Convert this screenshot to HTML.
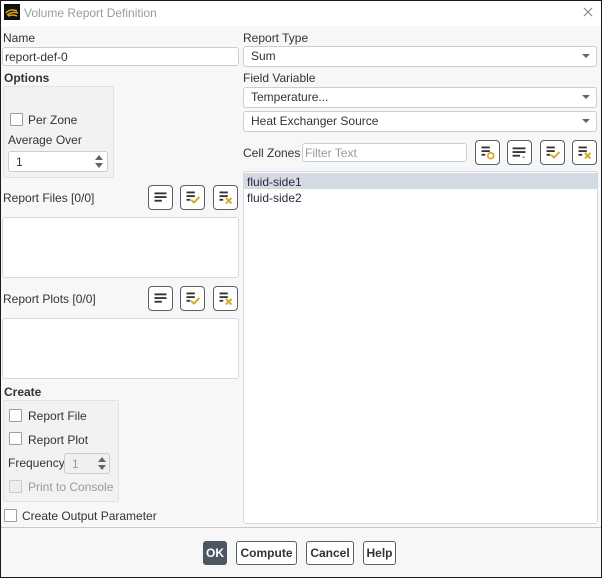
<!DOCTYPE html>
<html><head><meta charset="utf-8"><style>
*{box-sizing:border-box;margin:0;padding:0}
body{width:602px;height:578px;overflow:hidden;font-family:"Liberation Sans",sans-serif;font-size:12px;color:#333;background:#f7f7f7}
.win{position:absolute;left:0;top:0;width:602px;height:578px;background:#f7f7f7}
.a{position:absolute}
.t{position:absolute;line-height:14px;white-space:nowrap}
.b{font-weight:bold}
.in{position:absolute;background:#fff;border:1px solid #c9ced4;border-radius:3px}
.dd{position:absolute;background:#fff;border:1px solid #c9ced4;border-radius:3px;padding-left:7px;line-height:18px}
.dd:after{content:"";position:absolute;right:6px;top:7px;border-left:4px solid transparent;border-right:4px solid transparent;border-top:4px solid #666}
.grp{position:absolute;border:1px solid #e2e2e2;background:#f2f2f2;border-radius:2px}
.cb{position:absolute;width:13px;height:13px;border:1px solid #9aa0a6;background:#fff;border-radius:1px}
.ib{position:absolute;width:25px;height:25px;border:1px solid #5a6068;border-radius:4px;background:#fff}
.btn{position:absolute;height:24px;border:1px solid #5a6068;border-radius:3px;background:#fff;font-weight:bold;line-height:22px;text-align:center;font-size:12px;color:#333}
.list{position:absolute;background:#fff;border:1px solid #d4d8dc;border-radius:3px}
</style></head><body><div class="win">
<div class="a" style="left:0;top:0;width:602px;height:26px;background:#fff"></div>
<svg class="a" style="left:4px;top:4px" width="16" height="16" viewBox="0 0 16 16"><rect width="16" height="16" fill="#111"/><path d="M2 9 Q6 4 13 7 M3 11 Q8 7 14 9 M4 12 Q9 10 13 12" stroke="#d9a31c" stroke-width="1.5" fill="none"/></svg>
<div class="t" style="left:24px;top:6px;color:#9a9a9a;font-size:12px">Volume Report Definition</div>
<svg class="a" style="left:583px;top:7px" width="10" height="10"><path d="M1 1L9 9M9 1L1 9" stroke="#888" stroke-width="1.2"/></svg>

<div class="t" style="left:3px;top:31px">Name</div>
<div class="in" style="left:2px;top:47px;width:237px;height:19px"><span class="t" style="left:2px;top:2px">report-def-0</span></div>
<div class="t b" style="left:4px;top:71px">Options</div>
<div class="grp" style="left:3px;top:86px;width:111px;height:92px"></div>
<div class="cb" style="left:10px;top:113px"></div>
<div class="t" style="left:28px;top:113px">Per Zone</div>
<div class="t" style="left:8px;top:133px">Average Over</div>
<div class="in" style="left:8px;top:151px;width:100px;height:21px"><span class="t" style="left:7px;top:3px">1</span>
<div class="a" style="right:4px;top:3px;border-left:4px solid transparent;border-right:4px solid transparent;border-bottom:5px solid #666"></div>
<div class="a" style="right:4px;top:11px;border-left:4px solid transparent;border-right:4px solid transparent;border-top:5px solid #666"></div></div>

<div class="t" style="left:3px;top:191px">Report Files [0/0]</div>
<div class="list" style="left:2px;top:217px;width:237px;height:61px"></div>
<div class="t" style="left:3px;top:292px">Report Plots [0/0]</div>
<div class="list" style="left:2px;top:318px;width:237px;height:61px"></div>

<div class="t b" style="left:4px;top:385px">Create</div>
<div class="grp" style="left:3px;top:400px;width:116px;height:102px"></div>
<div class="cb" style="left:9px;top:409px"></div><div class="t" style="left:28px;top:409px">Report File</div>
<div class="cb" style="left:9px;top:432px"></div><div class="t" style="left:28px;top:433px">Report Plot</div>
<div class="t" style="left:8px;top:456px">Frequency</div>
<div class="in" style="left:64px;top:453px;width:46px;height:21px;background:#f0f0f0"><span class="t" style="left:7px;top:3px;color:#999">1</span>
<div class="a" style="right:3px;top:3px;border-left:4px solid transparent;border-right:4px solid transparent;border-bottom:5px solid #666"></div>
<div class="a" style="right:3px;top:11px;border-left:4px solid transparent;border-right:4px solid transparent;border-top:5px solid #666"></div></div>
<div class="cb" style="left:9px;top:480px;background:#eee;border-color:#ccc"></div><div class="t" style="left:28px;top:480px;color:#999">Print to Console</div>
<div class="cb" style="left:4px;top:509px"></div><div class="t" style="left:22px;top:509px">Create Output Parameter</div>

<div class="t" style="left:243px;top:31px">Report Type</div>
<div class="dd" style="left:243px;top:46px;width:354px;height:21px">Sum</div>
<div class="t" style="left:243px;top:71px">Field Variable</div>
<div class="dd" style="left:243px;top:87px;width:354px;height:21px">Temperature...</div>
<div class="dd" style="left:243px;top:111px;width:354px;height:21px">Heat Exchanger Source</div>
<div class="t" style="left:243px;top:146px">Cell Zones</div>
<div class="in" style="left:302px;top:143px;width:165px;height:19px"><span class="t" style="left:2px;top:2px;color:#999">Filter Text</span></div>
<div class="list" style="left:243px;top:171px;width:355px;height:353px">
<div class="a" style="left:0;top:1px;width:353px;height:16px;background:#d4dae2"></div>
<div class="t" style="left:3px;top:3px;color:#2a2a40">fluid-side1</div>
<div class="t" style="left:3px;top:19px;color:#2a2a40">fluid-side2</div></div>

<div class="a" style="left:1px;top:527px;width:600px;height:1px;background:#c8c8c8"></div>
<div class="btn" style="left:203px;top:541px;width:24px;background:#4c5560;color:#fff;border-color:#4c5560">OK</div>
<div class="btn" style="left:236px;top:541px;width:61px">Compute</div>
<div class="btn" style="left:306px;top:541px;width:48px">Cancel</div>
<div class="btn" style="left:363px;top:541px;width:33px">Help</div>

<svg width="0" height="0" style="position:absolute"><defs>
<g id="lines"><rect x="6" y="7" width="13" height="2" fill="#333"/><rect x="6" y="11" width="13" height="2" fill="#333"/><rect x="6" y="15" width="8" height="2" fill="#333"/></g>
<g id="chk"><rect x="6" y="6" width="9" height="2" fill="#333"/><rect x="6" y="10" width="9" height="2" fill="#333"/><rect x="6" y="14" width="4" height="2" fill="#333"/><path d="M11 15l3 3l6-6" stroke="#d9a31c" stroke-width="2" fill="none"/></g>
<g id="xx"><rect x="6" y="6" width="9" height="2" fill="#333"/><rect x="6" y="10" width="9" height="2" fill="#333"/><rect x="6" y="14" width="4" height="2" fill="#333"/><path d="M13 13l6 6M19 13l-6 6" stroke="#d9a31c" stroke-width="2"/></g>
<g id="circ"><rect x="6" y="6" width="9" height="2" fill="#333"/><rect x="6" y="10" width="9" height="2" fill="#333"/><rect x="6" y="14" width="4" height="2" fill="#333"/><circle cx="16" cy="16" r="3.2" stroke="#d9a31c" stroke-width="1.8" fill="none"/></g>
<g id="dl"><rect x="5" y="7" width="14" height="2" fill="#333"/><rect x="5" y="11" width="14" height="2" fill="#333"/><rect x="5" y="15" width="8" height="2" fill="#333"/><path d="M15 17h4l-2 2z" fill="#888"/></g>
</defs></svg>
<svg class="ib" style="left:148px;top:185px" viewBox="0 0 25 25"><use href="#lines"/></svg>
<svg class="ib" style="left:180px;top:185px" viewBox="0 0 25 25"><use href="#chk"/></svg>
<svg class="ib" style="left:213px;top:185px" viewBox="0 0 25 25"><use href="#xx"/></svg>
<svg class="ib" style="left:148px;top:286px" viewBox="0 0 25 25"><use href="#lines"/></svg>
<svg class="ib" style="left:180px;top:286px" viewBox="0 0 25 25"><use href="#chk"/></svg>
<svg class="ib" style="left:213px;top:286px" viewBox="0 0 25 25"><use href="#xx"/></svg>
<svg class="ib" style="left:475px;top:140px" viewBox="0 0 25 25"><use href="#circ"/></svg>
<svg class="ib" style="left:507px;top:140px" viewBox="0 0 25 25"><use href="#dl"/></svg>
<svg class="ib" style="left:540px;top:140px" viewBox="0 0 25 25"><use href="#chk"/></svg>
<svg class="ib" style="left:572px;top:140px" viewBox="0 0 25 25"><use href="#xx"/></svg>
<div class="a" style="left:0;top:0;width:602px;height:578px;border:1px solid #1a1a1a"></div>
</div></body></html>
